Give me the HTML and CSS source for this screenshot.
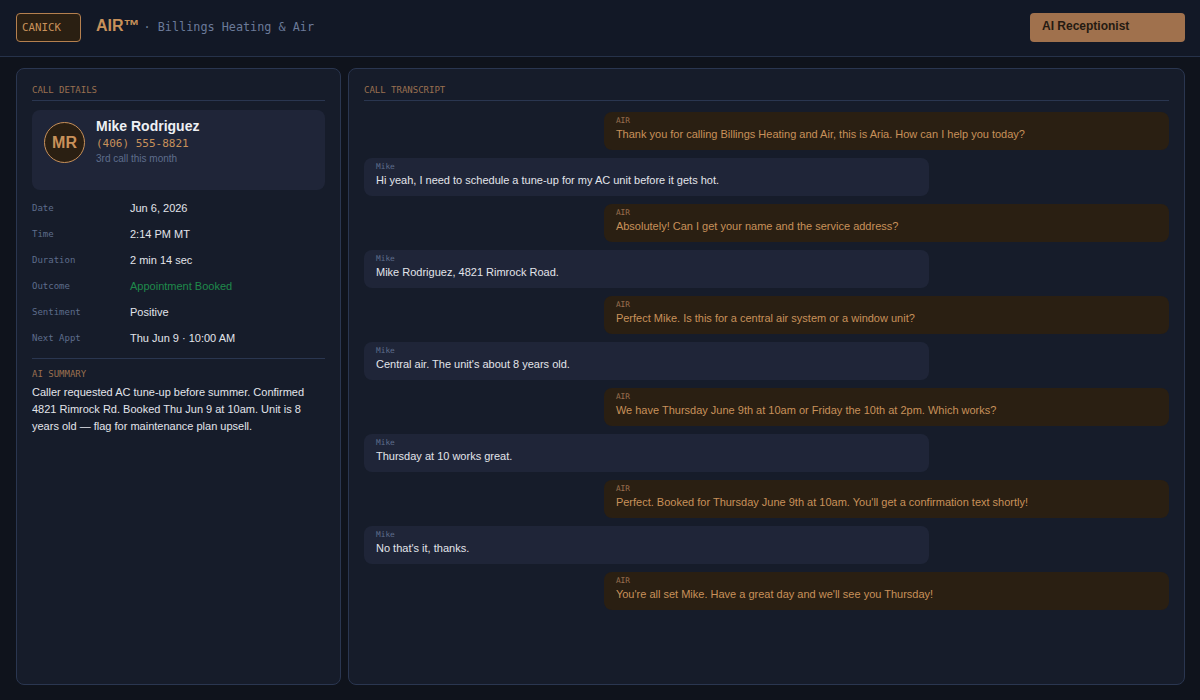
FILE: index.html
```html
<!DOCTYPE html>
<html lang="en">
<head>
<meta charset="utf-8">
<title>AIR™ · Billings Heating & Air</title>
<link rel="stylesheet" href="styles.css">
</head>
<body>
<header class="topbar">
  <div class="brand">
    <div class="logo-box">CANICK</div>
    <div class="product">AIR™</div>
    <div class="company">· Billings Heating &amp; Air</div>
  </div>
  <div class="mode-btn">AI Receptionist</div>
</header>
<main class="layout">
  <section class="panel details">
    <div class="panel-title">CALL DETAILS</div>
    <div class="caller-card">
      <div class="avatar">MR</div>
      <div class="caller-info">
        <div class="caller-name">Mike Rodriguez</div>
        <div class="caller-phone">(406) 555-8821</div>
        <div class="caller-note">3rd call this month</div>
      </div>
    </div>
    <div class="rows">
      <div class="row"><span class="row-label">Date</span><span class="row-value">Jun 6, 2026</span></div>
      <div class="row"><span class="row-label">Time</span><span class="row-value">2:14 PM MT</span></div>
      <div class="row"><span class="row-label">Duration</span><span class="row-value">2 min 14 sec</span></div>
      <div class="row"><span class="row-label">Outcome</span><span class="row-value good">Appointment Booked</span></div>
      <div class="row"><span class="row-label">Sentiment</span><span class="row-value">Positive</span></div>
      <div class="row"><span class="row-label">Next Appt</span><span class="row-value">Thu Jun 9 · 10:00 AM</span></div>
    </div>
    <div class="summary">
      <div class="summary-title">AI SUMMARY</div>
      <p class="summary-text">Caller requested AC tune-up before summer. Confirmed 4821 Rimrock Rd. Booked Thu Jun 9 at 10am. Unit is 8 years old — flag for maintenance plan upsell.</p>
    </div>
  </section>
  <section class="panel transcript">
    <div class="panel-title">CALL TRANSCRIPT</div>
    <div class="messages">
      <div class="msg air"><div class="msg-who">AIR</div><div class="msg-text">Thank you for calling Billings Heating and Air, this is Aria. How can I help you today?</div></div>
      <div class="msg caller"><div class="msg-who">Mike</div><div class="msg-text">Hi yeah, I need to schedule a tune-up for my AC unit before it gets hot.</div></div>
      <div class="msg air"><div class="msg-who">AIR</div><div class="msg-text">Absolutely! Can I get your name and the service address?</div></div>
      <div class="msg caller"><div class="msg-who">Mike</div><div class="msg-text">Mike Rodriguez, 4821 Rimrock Road.</div></div>
      <div class="msg air"><div class="msg-who">AIR</div><div class="msg-text">Perfect Mike. Is this for a central air system or a window unit?</div></div>
      <div class="msg caller"><div class="msg-who">Mike</div><div class="msg-text">Central air. The unit's about 8 years old.</div></div>
      <div class="msg air"><div class="msg-who">AIR</div><div class="msg-text">We have Thursday June 9th at 10am or Friday the 10th at 2pm. Which works?</div></div>
      <div class="msg caller"><div class="msg-who">Mike</div><div class="msg-text">Thursday at 10 works great.</div></div>
      <div class="msg air"><div class="msg-who">AIR</div><div class="msg-text">Perfect. Booked for Thursday June 9th at 10am. You'll get a confirmation text shortly!</div></div>
      <div class="msg caller"><div class="msg-who">Mike</div><div class="msg-text">No that's it, thanks.</div></div>
      <div class="msg air"><div class="msg-who">AIR</div><div class="msg-text">You're all set Mike. Have a great day and we'll see you Thursday!</div></div>
    </div>
  </section>
</main>
</body>
</html>
```

FILE: styles.css
```css
* { box-sizing: border-box; }
html, body { margin: 0; padding: 0; }
body {
  width: 1200px;
  height: 700px;
  overflow: hidden;
  background: #0f131c;
  font-family: "Liberation Sans", Arial, sans-serif;
  color: #e2e4ea;
}
.topbar {
  height: 57px;
  background: #121826;
  border-bottom: 1px solid #26324a;
  display: flex;
  align-items: center;
  justify-content: space-between;
  padding: 0 15px 1px 16px;
}
.brand { display: flex; align-items: center; }
.logo-box {
  width: 65px;
  height: 29px;
  border: 1px solid #b5804f;
  border-radius: 4px;
  background: #2a1f12;
  color: #c8915a;
  font-family: "DejaVu Sans Mono", "Liberation Mono", monospace;
  font-size: 10.8px;
  line-height: 27px;
  padding-left: 5px;
}
.product {
  margin-left: 15px;
  font-weight: bold;
  font-size: 16px;
  color: #c8915a;
  position: relative;
  top: -2px;
}
.company {
  margin-left: 4px;
  font-family: "DejaVu Sans Mono", "Liberation Mono", monospace;
  font-size: 11.8px;
  color: #6b7a99;
  position: relative;
  top: -1px;
}
.mode-btn {
  width: 155px;
  height: 29px;
  background: #a0714d;
  border-radius: 4px;
  color: #241a12;
  font-weight: bold;
  font-size: 12px;
  line-height: 16px;
  padding: 5px 12px 0;
}
.layout {
  display: grid;
  grid-template-columns: 325px 837px;
  gap: 7px;
  padding: 11px 15px 15px 16px;
  height: 643px;
}
.panel {
  background: #161c2a;
  border: 1px solid #2a3650;
  border-radius: 8px;
  padding: 15px;
  min-height: 0;
}
.panel-title {
  font-family: "DejaVu Sans Mono", "Liberation Mono", monospace;
  font-size: 9px;
  line-height: 12px;
  color: #9a7050;
  padding-bottom: 4px;
  border-bottom: 1px solid #2a3650;
}
.caller-card {
  margin-top: 9px;
  height: 80px;
  background: #1f2538;
  border-radius: 8px;
  padding: 8px 12px;
  display: flex;
  gap: 11px;
}
.avatar {
  flex: none;
  width: 41px;
  height: 41px;
  margin-top: 4px;
  border-radius: 50%;
  border: 1px solid #c8915a;
  background: #2a1f12;
  color: #c8915a;
  font-weight: bold;
  font-size: 16px;
  display: flex;
  align-items: center;
  justify-content: center;
}
.caller-name {
  font-weight: bold;
  font-size: 14px;
  line-height: 17px;
  color: #eef0f4;
}
.caller-phone {
  font-family: "DejaVu Sans Mono", "Liberation Mono", monospace;
  font-size: 11px;
  line-height: 15px;
  color: #c8915a;
  margin-top: 1px;
}
.caller-note {
  font-size: 10px;
  line-height: 15px;
  color: #5e6d8c;
}
.rows { margin-top: 5px; }
.row {
  display: flex;
  align-items: baseline;
  height: 26px;
  padding: 5px 0;
  line-height: 16px;
}
.row-label {
  width: 98px;
  flex: none;
  font-family: "DejaVu Sans Mono", "Liberation Mono", monospace;
  font-size: 9px;
  line-height: 16px;
  color: #5e6d8c;
  position: relative;
  top: -1px;
}
.row-value {
  font-size: 11px;
  line-height: 16px;
  color: #e2e4ea;
}
.row-value.good { color: #1f8a4a; }
.summary {
  margin-top: 7px;
  border-top: 1px solid #2a3650;
  padding-top: 9px;
}
.summary-title {
  font-family: "DejaVu Sans Mono", "Liberation Mono", monospace;
  font-size: 9px;
  line-height: 12px;
  color: #9a7050;
}
.summary-text {
  margin: 4px 0 0;
  font-size: 11px;
  line-height: 17px;
  color: #e2e4ea;
}
.messages {
  margin-top: 11px;
  display: flex;
  flex-direction: column;
  gap: 8px;
}
.msg {
  width: 70.2%;
  border-radius: 8px;
  padding: 3px 12px 7px;
}
.msg.air {
  align-self: flex-end;
  background: #2a1f12;
}
.msg.caller {
  align-self: flex-start;
  background: #1f2538;
}
.msg-who {
  font-family: "DejaVu Sans Mono", "Liberation Mono", monospace;
  font-size: 7.8px;
  line-height: 11px;
}
.msg.air .msg-who { color: #9a7050; }
.msg.caller .msg-who { color: #5e6d8c; }
.msg-text {
  font-size: 11px;
  line-height: 17px;
}
.msg.air .msg-text { color: #c8915a; }
.msg.caller .msg-text { color: #e2e4ea; }
```
